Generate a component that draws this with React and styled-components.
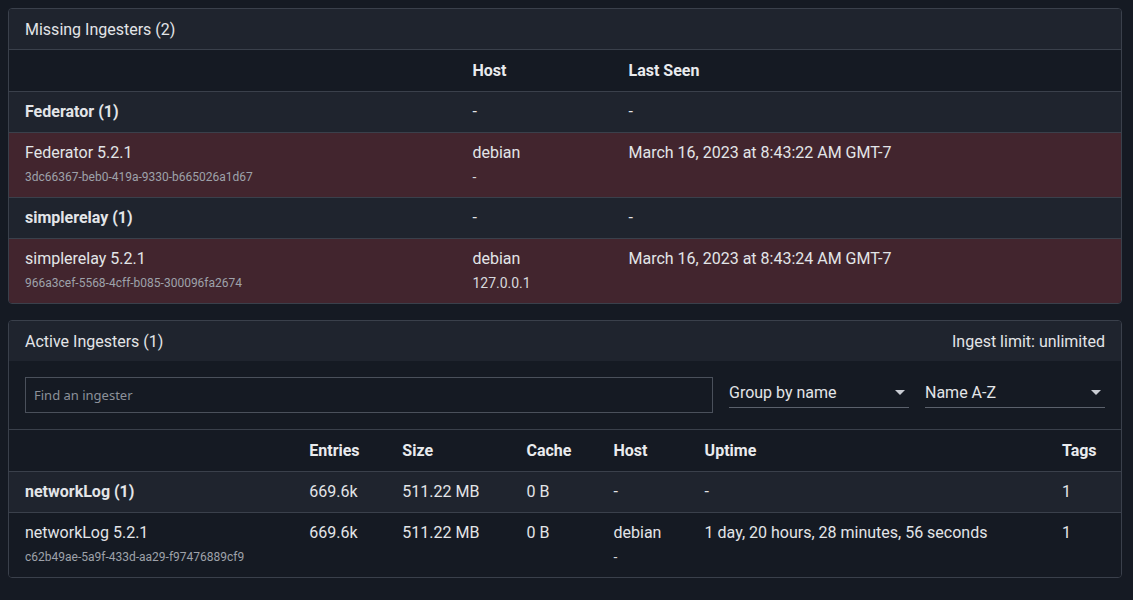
import React from 'react';
import styled, { createGlobalStyle } from 'styled-components';

const GlobalStyle = createGlobalStyle`
  body {
    margin: 0;
    background: #151a23;
    font-family: Roboto, "Liberation Sans", sans-serif;
    color: #e3e5e8;
  }
`;

const missingGroups = [
  {
    name: 'Federator (1)',
    items: [
      {
        name: 'Federator 5.2.1',
        uuid: '3dc66367-beb0-419a-9330-b665026a1d67',
        host: 'debian',
        ip: '-',
        lastSeen: 'March 16, 2023 at 8:43:22 AM GMT-7',
      },
    ],
  },
  {
    name: 'simplerelay (1)',
    items: [
      {
        name: 'simplerelay 5.2.1',
        uuid: '966a3cef-5568-4cff-b085-300096fa2674',
        host: 'debian',
        ip: '127.0.0.1',
        lastSeen: 'March 16, 2023 at 8:43:24 AM GMT-7',
      },
    ],
  },
];

const missingCols = [447, 156, 508];
const activeCols = [284, 93, 124, 87, 91, 357, 75];

const Page = () => {
  return (
    <Wrapper>
      <GlobalStyle />
      <Card>
        <CardHeader $bordered>
          <span>Missing Ingesters (2)</span>
        </CardHeader>
        <Table>
          <colgroup>
            {missingCols.map((w, i) => (
              <col key={i} style={{ width: w }} />
            ))}
          </colgroup>
          <thead>
            <tr>
              <Th />
              <Th>Host</Th>
              <Th>Last Seen</Th>
            </tr>
          </thead>
          <tbody>
            {missingGroups.map((g) => (
              <React.Fragment key={g.name}>
                <Tr $variant="group">
                  <Td $bold>{g.name}</Td>
                  <Td>-</Td>
                  <Td>-</Td>
                </Tr>
                {g.items.map((it) => (
                  <Tr $variant="missing" key={it.uuid}>
                    <Td>
                      {it.name}
                      <Uuid>{it.uuid}</Uuid>
                    </Td>
                    <Td>
                      {it.host}
                      <SubLine>{it.ip}</SubLine>
                    </Td>
                    <Td>{it.lastSeen}</Td>
                  </Tr>
                ))}
              </React.Fragment>
            ))}
          </tbody>
        </Table>
      </Card>

      <Card>
        <CardHeader>
          <span>Active Ingesters (1)</span>
          <span>Ingest limit: unlimited</span>
        </CardHeader>
        <Filters>
          <SearchInput type="text" placeholder="Find an ingester" />
          <Select>
            <span>Group by name</span>
            <Caret />
          </Select>
          <Select>
            <span>Name A-Z</span>
            <Caret />
          </Select>
        </Filters>
        <Table>
          <colgroup>
            {activeCols.map((w, i) => (
              <col key={i} style={{ width: w }} />
            ))}
          </colgroup>
          <thead>
            <tr>
              <Th />
              <Th>Entries</Th>
              <Th>Size</Th>
              <Th>Cache</Th>
              <Th>Host</Th>
              <Th>Uptime</Th>
              <Th>Tags</Th>
            </tr>
          </thead>
          <tbody>
            <Tr $variant="group">
              <Td $bold>networkLog (1)</Td>
              <Td>669.6k</Td>
              <Td>511.22 MB</Td>
              <Td>0 B</Td>
              <Td>-</Td>
              <Td>-</Td>
              <Td>1</Td>
            </Tr>
            <Tr>
              <Td>
                networkLog 5.2.1
                <Uuid>c62b49ae-5a9f-433d-aa29-f97476889cf9</Uuid>
              </Td>
              <Td>669.6k</Td>
              <Td>511.22 MB</Td>
              <Td>0 B</Td>
              <Td>
                debian
                <SubLine>-</SubLine>
              </Td>
              <Td>1 day, 20 hours, 28 minutes, 56 seconds</Td>
              <Td>1</Td>
            </Tr>
          </tbody>
        </Table>
      </Card>
    </Wrapper>
  );
};

const Caret = () => (
  <svg width="10" height="5" viewBox="0 0 10 5">
    <path d="M0 0 L10 0 L5 5 Z" fill="#c9ccd3" />
  </svg>
);

const Wrapper = styled.div`
  padding: 8px 11px 8px 8px;
  display: flex;
  flex-direction: column;
  gap: 16px;
`;

const Card = styled.section`
  border: 1px solid #3a404b;
  border-radius: 4px;
  overflow: hidden;
  background: #151a23;
`;

const CardHeader = styled.div`
  height: 40px;
  padding: 0 16px;
  display: flex;
  align-items: center;
  justify-content: space-between;
  background: #1f242e;
  font-size: 16px;
  color: #e3e5e8;
  border-bottom: ${(p) => (p.$bordered ? '1px solid #3a404b' : 'none')};
`;

const Filters = styled.div`
  display: flex;
  align-items: center;
  gap: 16px;
  padding: 16px;
  border-bottom: 1px solid #3a404b;
`;

const SearchInput = styled.input`
  flex: 0 0 688px;
  width: 688px;
  height: 36px;
  box-sizing: border-box;
  padding: 0 8px;
  background: #151a23;
  border: 1px solid #4a505b;
  border-radius: 0;
  color: #e3e5e8;
  font-family: "Noto Sans", "Open Sans", sans-serif;
  font-size: 13px;
  outline: none;
  &::placeholder {
    color: #8c919a;
  }
`;

const Select = styled.div`
  flex: 1;
  height: 31px;
  box-sizing: border-box;
  display: flex;
  align-items: center;
  justify-content: space-between;
  padding: 0 4px 0 0;
  margin-bottom: 5px;
  border-bottom: 1px solid #5b616c;
  font-size: 16px;
  color: #e3e5e8;
`;

const Table = styled.table`
  width: 100%;
  border-collapse: collapse;
  table-layout: fixed;
  font-size: 16px;
`;

const Th = styled.th`
  height: 41px;
  padding: 0 16px;
  text-align: left;
  font-weight: 700;
  color: #e9ebee;
  background: #151a23;
  border-bottom: 1px solid #3a404b;
`;

const rowBg = {
  group: '#1f242e',
  missing: '#42252e',
};

const Tr = styled.tr`
  background: ${(p) => rowBg[p.$variant] || '#151a23'};
  &:not(:last-child) td {
    border-bottom: 1px solid #3a404b;
  }
`;

const Td = styled.td`
  padding: 12px 16px;
  line-height: 16px;
  vertical-align: top;
  font-weight: ${(p) => (p.$bold ? 700 : 400)};
  color: #e3e5e8;
  white-space: nowrap;
`;

const Uuid = styled.div`
  margin-top: 8px;
  font-size: 12px;
  line-height: 16px;
  color: #9ea2aa;
`;

const SubLine = styled.div`
  margin-top: 8px;
  font-size: 14px;
  line-height: 16px;
  color: #d6d8dc;
`;

export default Page;
